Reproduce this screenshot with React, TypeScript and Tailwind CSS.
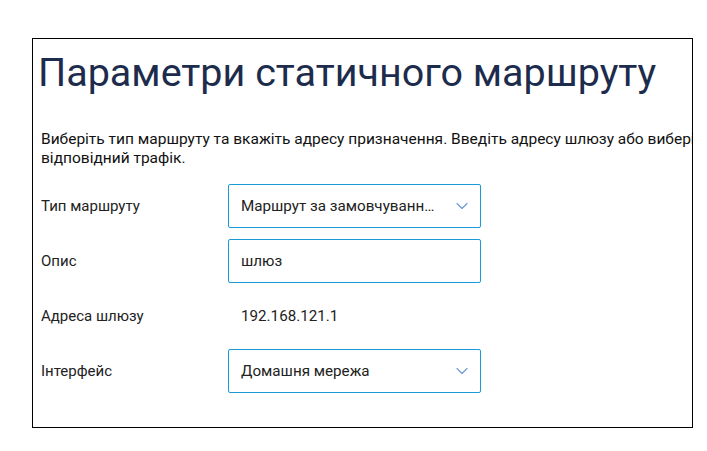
import { ChevronDown } from 'lucide-react';

const font = { fontFamily: 'Roboto, "Noto Sans", sans-serif' };

function Select({ value }: { value: string }) {
  return (
    <div className="flex items-center w-[253px] h-[44px] border border-[#1a9ad6] rounded-[2px] pl-[12px] pr-[8px] bg-white">
      <span className="flex-1 min-w-0 truncate text-[15.2px] text-[#222]">{value}</span>
      <ChevronDown className="ml-[10px] w-[20px] h-[20px] text-[#6a98d4] shrink-0" strokeWidth={1.3} />
    </div>
  );
}

function Input({ value }: { value: string }) {
  return (
    <div className="flex items-center w-[253px] h-[44px] border border-[#1a9ad6] rounded-[2px] px-[12px] bg-white">
      <span className="text-[15.2px] text-[#222]">{value}</span>
    </div>
  );
}

function Row({ label, children }: { label: string; children: React.ReactNode }) {
  return (
    <div className="flex items-center h-[44px]">
      <div className="w-[187px] text-[15px] text-[#222]">{label}</div>
      {children}
    </div>
  );
}

export default function App() {
  return (
    <div className="min-h-screen bg-white pl-[32px] pt-[38px]" style={font}>
      <div className="w-[661px] h-[390px] border border-black overflow-hidden">
        <h1 className="mt-[10px] pl-[5px] text-[39.5px] leading-[48px] text-[#1d2c4c] whitespace-nowrap">
          Параметри статичного маршруту
        </h1>
        <p className="mt-[33px] pl-[8px] text-[15.5px] leading-[19px] text-[#111] whitespace-nowrap">
          Виберіть тип маршруту та вкажіть адресу призначення. Введіть адресу шлюзу або виберіть
          <br />
          відповідний трафік.
        </p>
        <div className="mt-[16px] pl-[8px] flex flex-col gap-[11px]">
          <Row label="Тип маршруту">
            <Select value="Маршрут за замовчуванням" />
          </Row>
          <Row label="Опис">
            <Input value="шлюз" />
          </Row>
          <Row label="Адреса шлюзу">
            <span className="pl-[13px] text-[15.2px] text-[#222]">192.168.121.1</span>
          </Row>
          <Row label="Інтерфейс">
            <Select value="Домашня мережа" />
          </Row>
        </div>
      </div>
    </div>
  );
}
